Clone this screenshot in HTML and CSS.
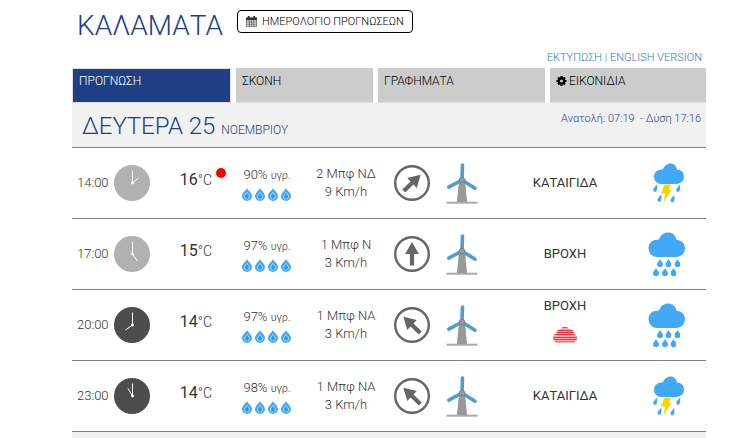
FILE: index.html
```
<!DOCTYPE html>
<html lang="el">
<head>
<meta charset="utf-8">
<title>Καλαμάτα</title>
<link rel="stylesheet" href="styles.css">
</head>
<body>
<svg class="sprite" aria-hidden="true">
  <symbol id="drop" viewBox="0 0 10 13">
    <path d="M5 0C6 2.500 10 5 10 8.200A5 4.800 0 0 1 0 8.200C0 5 4 2.500 5 0Z" fill="#41a8f5"/>
    <path d="M5 3.500C5.600 5.200 8 6.500 8 8.600A3 2.800 0 0 1 2 8.600C2 6.500 4.400 5.200 5 3.500Z" fill="#a5d6fa"/>
    <path d="M5 4.800C5.400 6.300 7 7.300 7 8.800A2 2 0 0 1 3 8.800C3 7.300 4.600 6.300 5 4.800Z" fill="#2f97e8"/>
  </symbol>
  <symbol id="drops" viewBox="0 0 50 13">
    <use href="#drop" x="0" width="10" height="13"/>
    <use href="#drop" x="13" width="10" height="13"/>
    <use href="#drop" x="26" width="10" height="13"/>
    <use href="#drop" x="39" width="10" height="13"/>
  </symbol>
  <symbol id="arrow" viewBox="-18 -18 36 36">
    <path d="M0-12L6.900 0H2.100V11.500H-2.100V0H-6.900Z" fill="#666"/>
  </symbol>
  <symbol id="turbine" viewBox="0 -2 32 44">
    <path d="M13.300 19H18.700L20.700 39H11.300Z" fill="#999" stroke="#858585" stroke-width=".6"/>
    <path d="M.5 39.700H31.500" stroke="#aaa" stroke-width="2"/>
    <path d="M16.500 2L16 17L2.800 24.200M16 17L29 25.200" fill="none" stroke="#4d9fd1" stroke-width="3.600" stroke-linecap="round"/>
    <circle cx="16" cy="17" r="2.800" fill="#999" stroke="#777" stroke-width=".7"/>
  </symbol>
  <symbol id="bead" viewBox="0 0 6 8">
    <path d="M3 0C3.500 1.800 6 3.300 6 5.200A3 2.800 0 0 1 0 5.200C0 3.300 2.500 1.800 3 0Z" fill="#41a8f5"/>
  </symbol>
  <symbol id="rain" viewBox="0 0 40 44">
    <path d="M9 25A8.700 8.700 0 0 1 .5 16.300C.5 11 4.500 7.500 9.500 7.700C11 8 11.200 7 12 5.200C16-1.500 27-1.200 28.500 8C33.500 7.500 37 11.500 37 16.500A8.500 8.500 0 0 1 28.500 25Z" fill="#41a8f5"/>
    <use href="#bead" x="9" y="27" width="6" height="8"/>
    <use href="#bead" x="17.500" y="27" width="6" height="8"/>
    <use href="#bead" x="26.500" y="27" width="6" height="8"/>
    <use href="#bead" x="5" y="36" width="6" height="8"/>
    <use href="#bead" x="14" y="36" width="6" height="8"/>
    <use href="#bead" x="22.500" y="36" width="6" height="8"/>
  </symbol>
  <symbol id="storm" viewBox="-1 0 32 40">
    <path d="M8.500 21A7.200 7.200 0 0 1 1 13.800C1 9.500 4.500 6.500 8.300 6.500C10 6.800 10 6 10.500 5C14-1.500 23-1.200 24 6.600C28 6.500 31 9.700 31 13.700A7.200 7.200 0 0 1 23.800 21Z" fill="#41a8f5"/>
    <path d="M11.500 21.500H18L15.800 27H18.500L10.500 39.500L12.300 30.500H8Z" fill="#ffd000"/>
    <path id="tear" d="M4 21.500C4.500 24 4.500 28.500 2 29A2 2 0 0 1 .2 26.800C.5 24.500 2.800 23.500 4 21.500Z" fill="#41a8f5"/>
    <use href="#tear" x="23"/>
    <use href="#tear" x="4.300" y="10"/>
    <use href="#tear" x="17.300" y="10.500"/>
  </symbol>
  <symbol id="dust" viewBox="0 0 24 16">
    <clipPath id="dust-shape"><path d="M3 15.500C.5 14 0 12 0 10.500C0 8 1.500 7 3.500 7C3.500 4 5 2.500 7.500 1.800C10-.5 14-.5 16 2C19 2 21 4 21 7C23 7.500 24 9 24 11C24 13 23 15 21 15.500Z"/></clipPath>
    <g clip-path="url(#dust-shape)">
      <path d="M0 0H24V16H0Z" fill="#fba8ad"/>
      <path d="M0 .5H24M0 3.500H24M0 5.500H24M0 7.500H24M0 10.500H24M0 12.500H24M0 15H24" stroke="#f0323c"/>
    </g>
  </symbol>
</svg>

<main class="page">
  <header class="top">
    <h1 class="city">ΚΑΛΑΜΑΤΑ</h1>
    <button class="calendar" type="button">
      <svg class="calendar-icon" viewBox="0 0 12 12" aria-hidden="true">
        <path d="M.5 2.500V11.500H11.500V2.500ZM.5 5.500H11.500M.5 7.500H11.500M.5 9.500H11.500M3.500 4.500V11.500M6 4.500V11.500M8.500 4.500V11.500" fill="none" stroke="#444" stroke-width=".7"/>
        <path d="M0 1.500H2V0H4V1.500H8V0H10V1.500H12V4.300H0Z" fill="#333"/>
      </svg>
      ΗΜΕΡΟΛΟΓΙΟ ΠΡΟΓΝΩΣΕΩΝ
    </button>
  </header>
  <p class="links"><a href="#print">ΕΚΤΥΠΩΣΗ</a> | <a href="#en">ENGLISH VERSION</a></p>

  <nav class="tabs">
    <a class="tab tab-active" href="#forecast">ΠΡΟΓΝΩΣΗ</a>
    <a class="tab" href="#dust-map">ΣΚΟΝΗ</a>
    <a class="tab" href="#charts">ΓΡΑΦΗΜΑΤΑ</a>
    <a class="tab" href="#icons"><svg class="gear" viewBox="-6 -6 12 12" aria-hidden="true"><circle r="3" fill="none" stroke="#000" stroke-width="2.600"/><path d="M0-5.500V-3.500M0 3.500V5.500M-5.500 0H-3.500M3.500 0H5.500M-3.800-3.800L-2.500-2.500M3.800-3.800L2.500-2.500M-3.800 3.800L-2.500 2.500M3.800 3.800L2.500 2.500" stroke="#000" stroke-width="2.400"/></svg>ΕΙΚΟΝΙΔΙΑ</a>
  </nav>

  <section id="forecast">
    <div class="day">
      <h2 class="date">ΔΕΥΤΕΡΑ 25 <span class="month">ΝΟΕΜΒΡΙΟΥ</span></h2>
      <p class="sun">Ανατολή: 07:19 &nbsp;- Δύση 17:16</p>
    </div>
    <table class="hours">
      <colgroup><col class="c-time"><col class="c-temp"><col class="c-hum"><col class="c-wind"><col class="c-dir"><col class="c-desc"><col class="c-icon"></colgroup>
      <tbody>
        <tr>
          <td><div class="time">14:00 <svg class="dial" viewBox="-18 -18 36 36"><circle r="18" fill="#b1b1af"/><path d="M.5-12.500V0L6.500-5" fill="none" stroke="#fff"/><circle cx=".5" r="1.400" fill="#fff"/></svg></div></td>
          <td><span class="temp">16<span class="unit">°C</span><span class="hot"></span></span></td>
          <td><div class="line">90% <span class="hum">υγρ.</span></div><svg class="drops"><use href="#drops"/></svg></td>
          <td><div class="line">2 Μπφ ΝΔ</div><div class="line">9 Km/h</div></td>
          <td><div class="wind"><svg class="compass" viewBox="-18 -18 36 36"><circle r="16.800" fill="none" stroke="#666" stroke-width="2.400"/><use href="#arrow" x="-18" y="-18" width="36" height="36" transform="rotate(46)"/></svg><svg class="turbine"><use href="#turbine"/></svg></div></td>
          <td class="desc">ΚΑΤΑΙΓΙΔΑ</td>
          <td><svg class="storm"><use href="#storm"/></svg></td>
        </tr>
        <tr>
          <td><div class="time">17:00 <svg class="dial" viewBox="-18 -18 36 36"><circle r="18" fill="#b1b1af"/><path d="M.5-12.500V0L5.500 7" fill="none" stroke="#fff"/><circle cx=".5" r="1.400" fill="#fff"/></svg></div></td>
          <td><span class="temp">15<span class="unit">°C</span></span></td>
          <td><div class="line">97% <span class="hum">υγρ.</span></div><svg class="drops"><use href="#drops"/></svg></td>
          <td><div class="line">1 Μπφ Ν</div><div class="line">3 Km/h</div></td>
          <td><div class="wind"><svg class="compass" viewBox="-18 -18 36 36"><circle r="16.800" fill="none" stroke="#666" stroke-width="2.400"/><use href="#arrow" x="-18" y="-18" width="36" height="36"/></svg><svg class="turbine"><use href="#turbine"/></svg></div></td>
          <td class="desc">ΒΡΟΧΗ</td>
          <td><svg class="rain"><use href="#rain"/></svg></td>
        </tr>
        <tr>
          <td><div class="time">20:00 <svg class="dial" viewBox="-18 -18 36 36"><circle r="18" fill="#4d4d4d"/><path d="M.5-12.500V0L-6.500 5" fill="none" stroke="#fff"/><circle cx=".5" r="1.400" fill="#fff"/></svg></div></td>
          <td><span class="temp">14<span class="unit">°C</span></span></td>
          <td><div class="line">97% <span class="hum">υγρ.</span></div><svg class="drops"><use href="#drops"/></svg></td>
          <td><div class="line">1 Μπφ ΝΑ</div><div class="line">3 Km/h</div></td>
          <td><div class="wind"><svg class="compass" viewBox="-18 -18 36 36"><circle r="16.800" fill="none" stroke="#666" stroke-width="2.400"/><use href="#arrow" x="-18" y="-18" width="36" height="36" transform="rotate(-46)"/></svg><svg class="turbine"><use href="#turbine"/></svg></div></td>
          <td class="desc">ΒΡΟΧΗ<svg class="dust"><use href="#dust"/></svg></td>
          <td><svg class="rain"><use href="#rain"/></svg></td>
        </tr>
        <tr>
          <td><div class="time">23:00 <svg class="dial" viewBox="-18 -18 36 36"><circle r="18" fill="#4d4d4d"/><path d="M.5-12.500V0L-4-7.500" fill="none" stroke="#fff"/><circle cx=".5" r="1.400" fill="#fff"/></svg></div></td>
          <td><span class="temp">14<span class="unit">°C</span></span></td>
          <td><div class="line">98% <span class="hum">υγρ.</span></div><svg class="drops"><use href="#drops"/></svg></td>
          <td><div class="line">1 Μπφ ΝΑ</div><div class="line">3 Km/h</div></td>
          <td><div class="wind"><svg class="compass" viewBox="-18 -18 36 36"><circle r="16.800" fill="none" stroke="#666" stroke-width="2.400"/><use href="#arrow" x="-18" y="-18" width="36" height="36" transform="rotate(-46)"/></svg><svg class="turbine"><use href="#turbine"/></svg></div></td>
          <td class="desc">ΚΑΤΑΙΓΙΔΑ</td>
          <td><svg class="storm"><use href="#storm"/></svg></td>
        </tr>
      </tbody>
    </table>
    <div class="next-day"></div>
  </section>
</main>
</body>
</html>
```
FILE: styles.css
```
* { box-sizing: border-box; }

body {
  margin: 0;
  background: #fff;
  color: #333;
  font: 300 13px/18px Roboto, "Liberation Sans", sans-serif;
}

h1, h2, p { margin: 0; font-weight: 300; }
a { color: inherit; text-decoration: none; }
svg { display: block; }
.sprite { position: absolute; width: 0; height: 0; }

.page { padding: 0 27px 0 72px; }

.top {
  display: flex;
  align-items: flex-start;
  gap: 14px;
  padding: 10px 0 0 5px;
}
.city { color: #1e3f85; font-size: 28px; line-height: 32px; }
.calendar {
  display: flex;
  align-items: center;
  gap: 5px;
  height: 23px;
  padding: 0 8px;
  border: 1px solid #000;
  border-radius: 4px;
  background: #fff;
  color: #000;
  font: 300 11px/16px Roboto, "Liberation Sans", sans-serif;
}
.calendar-icon { width: 11px; height: 11px; }

.links {
  padding: 7px 4px 1px 0;
  color: #337ab7;
  font-size: 11px;
  text-align: right;
}

.tabs {
  display: grid;
  grid-template-columns: 159fr 137fr 167fr 156fr;
  gap: 5px;
}
.tab {
  display: flex;
  align-items: flex-start;
  gap: 2px;
  height: 35px;
  padding: 4px 6px;
  border-bottom: 1px solid #ddd;
  background: #ccc;
  color: #000;
  font-size: 12px;
}
.tab-active { padding-top: 3px; border: 1px solid #ddd; background: #1e3f85; color: #fff; }
.gear { width: 11px; height: 18px; }

.day {
  display: flex;
  justify-content: space-between;
  height: 45px;
  padding: 7px 5px 0 10px;
  border-bottom: 1px solid #808080;
  background: #f1f1f1;
  color: #1e3f85;
}
.date { font-size: 24px; line-height: 32px; }
.month { font-size: 12px; }
.sun { font-size: 11px; }

.hours {
  width: 100%;
  table-layout: fixed;
  border-spacing: 0;
  text-align: center;
}
.hours td {
  height: 71px;
  padding: 0;
  border-bottom: 1px solid #808080;
  vertical-align: middle;
}
.hours svg { margin: 0 auto; }
.c-time { width: 84px; }
.c-temp { width: 80px; }
.c-hum { width: 62px; }
.c-wind { width: 96px; }
.c-dir { width: 106px; }
.c-desc { width: 130px; }
.c-icon { width: 76px; }

.time, .wind { display: flex; align-items: center; }
.time { gap: 5px; padding-left: 5px; }
.wind { gap: 16px; }
.hours .dial, .hours .compass { width: 36px; height: 36px; margin: 0; }
.hours .turbine { width: 32px; height: 44px; margin: 0; }

.temp {
  position: relative;
  display: inline-block;
  padding-bottom: 6px;
  font-size: 16px;
  font-weight: 400;
}
.unit { font-size: 14px; font-weight: 300; }
.hot {
  position: absolute;
  top: -3px;
  right: -14px;
  width: 10px;
  height: 10px;
  border-radius: 50%;
  background: #f00;
}
.hum { font-size: 11px; }
.hours .drops { width: 50px; height: 13px; margin-top: 3px; }
.desc { font-weight: 400; }
.rain { width: 40px; height: 44px; }
.storm { width: 32px; height: 40px; }
.hours .dust { width: 24px; height: 16px; margin-top: 12px; margin-bottom: 10px; }

.next-day { height: 6px; background: #f1f1f1; }
```
